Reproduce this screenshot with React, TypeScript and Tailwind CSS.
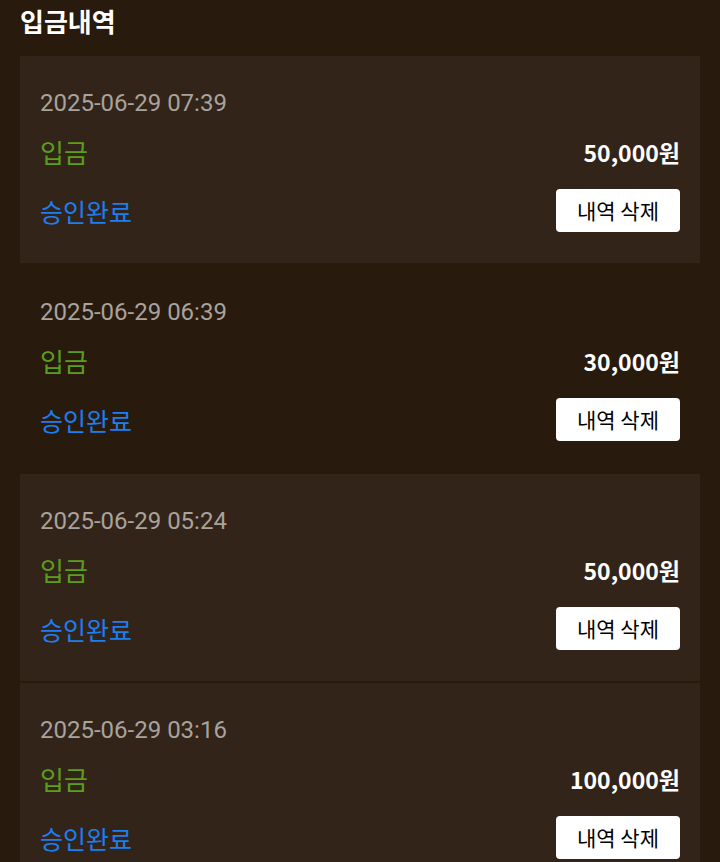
import React from 'react'

type Item = { date: string; amount: string; filled: boolean }

const items: Item[] = [
  { date: '2025-06-29 07:39', amount: '50,000원', filled: true },
  { date: '2025-06-29 06:39', amount: '30,000원', filled: false },
  { date: '2025-06-29 05:24', amount: '50,000원', filled: true },
  { date: '2025-06-29 03:16', amount: '100,000원', filled: true },
]

const kr = { fontFamily: '"Noto Sans CJK KR", "Noto Sans", sans-serif' }

export default function App() {
  return (
    <div className="min-h-screen w-full bg-[#281a0c] px-5 pb-10" style={kr}>
      <h1 className="h-[44px] pt-[3px] text-[26px] leading-[36px] font-bold text-white">입금내역</h1>
      <div className="mt-[12px] flex flex-col gap-[2px]">
        {items.map((it, i) => (
          <div
            key={i}
            className={`h-[207px] px-5 pt-[33px] flex flex-col ${it.filled ? 'bg-[#33241a]' : ''}`}
          >
            <div
              className="h-[28px] text-[24px] leading-[28px] text-[#a8a39d]"
              style={{ fontFamily: 'Roboto, "Liberation Sans", sans-serif' }}
            >
              {it.date}
            </div>
            <div className="mt-[20px] h-[30px] flex items-center justify-between">
              <span className="text-[26px] leading-[30px] text-[#5a9f1c]">입금</span>
              <span className="text-[23px] leading-[30px] font-semibold text-white">{it.amount}</span>
            </div>
            <div className="mt-[22px] h-[43px] flex items-center justify-between">
              <span className="text-[25px] leading-[30px] text-[#1b7ff2]">승인완료</span>
              <button className="h-[43px] w-[124px] rounded-[4px] bg-white text-[21px] text-black">
                내역 삭제
              </button>
            </div>
          </div>
        ))}
      </div>
    </div>
  )
}
